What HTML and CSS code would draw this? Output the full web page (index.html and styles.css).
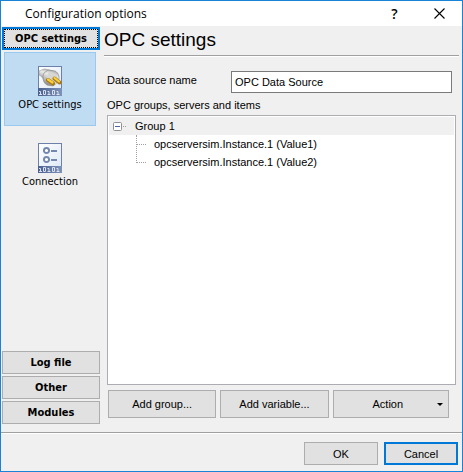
FILE: index.html
```
<!DOCTYPE html>
<html lang="en">
<head>
    <meta charset="UTF-8">
    <meta name="viewport" content="width=device-width, initial-scale=1.0">
    <title>Configuration options</title>
    <link rel="stylesheet" href="styles.css">
</head>
<body>
    <div class="window">
        <header class="title-bar">
            <span class="title">Configuration options</span>
            <button class="title-btn" type="button" aria-label="Help">?</button>
            <button class="title-btn" type="button" aria-label="Close">
                <svg width="11" height="11" viewBox="0 0 11 11"><path d="M.5.5l10 10M10.500.5l-10 10" stroke="#000" stroke-width="1.100"/></svg>
            </button>
        </header>

        <div class="content">
            <nav class="sidebar">
                <button class="section-btn current" type="button">OPC settings</button>
                <div class="section-items">
                    <button class="item selected" type="button">
                        <svg width="24" height="30" viewBox="0 0 24 30">
                            <defs>
                                <linearGradient id="paper" x1="0" y1="0" x2="1" y2="1">
                                    <stop offset="0" stop-color="#fff"/>
                                    <stop offset="1" stop-color="#dbe7f5"/>
                                </linearGradient>
                                <linearGradient id="strip" x1="0" y1="0" x2="1" y2="0">
                                    <stop offset="0" stop-color="#4a608f"/>
                                    <stop offset="1" stop-color="#7f93b8"/>
                                </linearGradient>
                                <linearGradient id="metal" x1=".7" y1="0" x2=".3" y2="1">
                                    <stop offset="0" stop-color="#a8a8a6"/>
                                    <stop offset=".35" stop-color="#ececea"/>
                                    <stop offset="1" stop-color="#858583"/>
                                </linearGradient>
                            </defs>
                            <rect x=".5" y=".5" width="23" height="29" fill="url(#paper)" stroke="#6d80aa"/>
                            <path d="M1 5c2 0 3-2 6-2l8 2-8 10-4-5-2-1z" fill="url(#metal)" stroke="#9a9b9b" stroke-width=".6"/>
                            <path d="M10 4l7 1c4 2 5 7 3 11l-5 4-6-1c-4-2-5-8-3-12z" fill="url(#metal)" stroke="#8b8b8a" stroke-width=".7"/>
                            <ellipse cx="14.500" cy="12.500" rx="5" ry="6.500" transform="rotate(-30 14.500 12.500)" fill="#d6d6d2"/>
                            <path d="M10 14l5 3.500M16.500 12.500l5 4" stroke="#a87912" stroke-width="4" stroke-linecap="round"/>
                            <path d="M10 13.500l4.500 3M16.500 12l4.500 3.500" stroke="#fbd03a" stroke-width="2.200" stroke-linecap="round"/>
                            <rect y="22" width="24" height="8" fill="url(#strip)"/>
                            <path d="M1 25.500h1.500v3M5.500 24.500h2v4h-2zM9.500 25.500h1.500v3M14.500 24.500h2v4h-2zM18.500 25.500h1.500v3M1 28.500h3M9.500 28.500h3M18.500 28.500h3" fill="none" stroke="#e6ebf4" stroke-width=".9"/>
                        </svg>
                        <span>OPC settings</span>
                    </button>
                    <button class="item" type="button">
                        <svg width="24" height="30" viewBox="0 0 24 30">
                            <rect x=".5" y=".5" width="23" height="29" fill="url(#paper)" stroke="#6d80aa"/>
                            <circle cx="8.500" cy="7.500" r="2.500" fill="#fff" stroke="#7487ae" stroke-width="1.800"/>
                            <circle cx="8.500" cy="16.500" r="2.500" fill="#fff" stroke="#7487ae" stroke-width="1.800"/>
                            <path d="M5 7.500h1M11 7.500h1M13 8h6M5 16.500h1M11 16.500h1M13 17h6" stroke="#7487ae" stroke-width="1.800"/>
                            <rect y="23" width="24" height="7" fill="url(#strip)"/>
                            <path d="M1 25.500h1.500v3M5.500 24.500h2v4h-2zM9.500 25.500h1.500v3M14.500 24.500h2v4h-2zM18.500 25.500h1.500v3M1 28.500h3M9.500 28.500h3M18.500 28.500h3" fill="none" stroke="#e6ebf4" stroke-width=".9"/>
                        </svg>
                        <span>Connection</span>
                    </button>
                </div>
                <button class="section-btn" type="button">Log file</button>
                <button class="section-btn" type="button">Other</button>
                <button class="section-btn" type="button">Modules</button>
            </nav>

            <main class="page">
                <h1>OPC settings</h1>
                <div class="field">
                    <label for="source-name">Data source name</label>
                    <input id="source-name" type="text" value="OPC Data Source">
                </div>
                <div class="tree-label" id="tree-label">OPC groups, servers and items</div>
                <ul class="tree" role="tree" aria-labelledby="tree-label">
                    <li role="treeitem" aria-expanded="true">
                        <div class="row group">
                            <svg width="14" height="9" viewBox="0 0 14 9">
                                <rect x=".5" y=".5" width="8" height="8" rx="1" fill="#fff" stroke="#919191"/>
                                <path d="M2 4.500h5" stroke="#4b63a7"/>
                                <path d="M10 4.500h4" stroke="#a0a0a0" stroke-dasharray="1 1"/>
                            </svg>
                            <span>Group 1</span>
                        </div>
                        <ul class="branch" role="group">
                            <li class="row" role="treeitem">opcserversim.Instance.1 (Value1)</li>
                            <li class="row" role="treeitem">opcserversim.Instance.1 (Value2)</li>
                        </ul>
                    </li>
                </ul>
                <div class="actions">
                    <button class="btn" type="button">Add group...</button>
                    <button class="btn" type="button">Add variable...</button>
                    <button class="btn btn-menu" type="button" aria-haspopup="menu">Action</button>
                </div>
            </main>
        </div>

        <footer class="footer">
            <button class="btn" type="button">OK</button>
            <button class="btn btn-default" type="button">Cancel</button>
        </footer>
    </div>
</body>
</html>
```

FILE: styles.css
```
* {
    margin: 0;
    padding: 0;
    box-sizing: border-box;
}

body {
    color: #000;
    font: 11px/16px "Liberation Sans", Arial, sans-serif;
}

button,
input {
    color: inherit;
    font: inherit;
}

ul {
    list-style: none;
}

.window {
    min-height: 100vh;
    display: flex;
    flex-direction: column;
    border: 1px solid #1883d7;
    background-color: #f0f0f0;
}

/* title bar */
.title-bar {
    height: 25px;
    padding-left: 24px;
    display: flex;
    align-items: center;
    background-color: #fff;
    font: 12px/16px "Open Sans", "Segoe UI", sans-serif;
}

.title-bar .title {
    flex: 1;
}

.title-btn {
    width: 45px;
    height: 25px;
    display: flex;
    align-items: center;
    justify-content: center;
    border: 0;
    background: none;
    font-size: 14px;
    font-weight: 600;
}

.content {
    flex: 1;
    display: flex;
}

/* sidebar */
.sidebar {
    width: 101px;
    padding: 1px 2px 8px 1px;
    display: flex;
    flex-direction: column;
    gap: 2px;
}

.section-btn {
    height: 23px;
    border: 1px solid #adadad;
    background-color: #e1e1e1;
    font: bold 11px/16px "DejaVu Sans Condensed", Tahoma, sans-serif;
}

.section-btn.current {
    border: 2px solid #0078d7;
    outline: 1px dotted #000;
    outline-offset: -3px;
}

.section-items {
    flex: 1;
    padding: 0 4px 0 2px;
}

.item {
    width: 100%;
    height: 74px;
    margin-bottom: 3px;
    display: flex;
    flex-direction: column;
    align-items: center;
    justify-content: center;
    gap: 1px;
    border: 1px solid transparent;
    background: none;
    font: 11px/16px "DejaVu Sans Condensed", Tahoma, sans-serif;
}

.item.selected {
    border-color: #99c9ef;
    background-color: #c0dcf3;
}

/* settings page */
.page {
    flex: 1;
    padding: 0 6px 14px 5px;
    display: flex;
    flex-direction: column;
}

h1 {
    height: 30px;
    margin: 0 -3px 15px;
    border-bottom: 1px solid #a0a0a0;
    box-shadow: 0 1px 0 #fff;
    font-size: 19px;
    font-weight: normal;
    line-height: 28px;
}

.field {
    padding-right: 4px;
    display: flex;
}

.field label {
    width: 124px;
    line-height: 18px;
}

.field input {
    flex: 1;
    min-width: 0;
    height: 22px;
    padding: 0 3px;
    border: 1px solid #7a7a7a;
    background-color: #fff;
}

.tree-label {
    margin: 4px 0 2px;
}

.tree {
    flex: 1;
    padding: 1px;
    border: 1px solid #abadb3;
    background-color: #fff;
}

.row {
    height: 18px;
    line-height: 18px;
}

.group {
    padding-left: 4px;
    display: flex;
    align-items: center;
    gap: 8px;
    background-color: #f0f0f0;
}

.branch {
    padding-left: 27px;
}

/* dotted lines that tie the items to their group */
.branch .row {
    display: flex;
}

.branch .row::before {
    content: "";
    width: 9px;
    height: 9px;
    margin-right: 8px;
    border-left: 1px dotted #a0a0a0;
    border-bottom: 1px dotted #a0a0a0;
}

.branch .row + .row::before {
    height: 18px;
    margin-top: -9px;
}

.btn {
    border: 1px solid #adadad;
    background-color: #e1e1e1;
}

.actions {
    margin-top: 5px;
    padding: 0 7px 0 1px;
    display: grid;
    grid-template-columns: 108fr 108fr 116fr;
    gap: 4px;
}

.actions .btn {
    height: 28px;
}

.actions .btn-menu {
    padding: 0 5px;
    display: flex;
    align-items: center;
    justify-content: space-between;
}

.btn-menu::before {
    content: "";
}

.btn-menu::after {
    content: "";
    border: 3px solid transparent;
    border-top-color: #000;
    border-bottom: 0;
}

/* footer */
.footer {
    height: 39px;
    padding: 9px 4px 0;
    display: flex;
    justify-content: flex-end;
    gap: 6px;
    border-top: 1px solid #a0a0a0;
    box-shadow: inset 0 1px 0 #fff;
}

.footer .btn {
    width: 74px;
    height: 23px;
}

.footer .btn-default {
    border: 2px solid #0078d7;
}
```
